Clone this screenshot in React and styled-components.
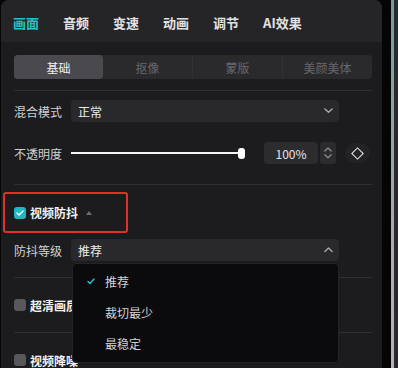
import styled, { createGlobalStyle } from "styled-components";

const GlobalStyle = createGlobalStyle`
  html, body {
    margin: 0;
    padding: 0;
    background: #060607;
  }
  body {
    font-family: "Noto Sans CJK SC", "Noto Sans", sans-serif;
  }
`

const Screen = styled.div`
  display: flex;
  width: 398px;
  height: 368px;
  overflow: hidden;
  padding-left: 1px;
  box-sizing: border-box;
`

const Panel = styled.div`
  width: 381px;
  height: 368px;
  flex-shrink: 0;
  background: #1c1c1e;
  border-radius: 8px 8px 0 0;
  overflow: hidden;
`

const Gap = styled.div`
  width: 9px;
  flex-shrink: 0;
  background: #050506;
`

const Stripe = styled.div`
  width: 3px;
  flex-shrink: 0;
  background: linear-gradient(to bottom, #6c9e9c 0%, #8aa7a6 35%, #b3a9b3 70%, #bbb0ba 100%);
`

const Edge = styled.div`
  flex: 1;
  background: #2a282e;
`

const TabBar = styled.div`
  height: 42px;
  display: flex;
  align-items: center;
  padding: 0 0 0 12px;
  background: #252528;
  gap: 24px;
`

const Tab = styled.div`
  font-size: 13px;
  font-weight: 600;
  color: ${p => (p.active ? "#22c3c9" : "#e2e2e4")};
  padding-top: 2px;
`

const Content = styled.div`
  padding: 13px 10px 0 13px;
`

const Segmented = styled.div`
  display: flex;
  height: 24px;
  background: #2a2a2d;
  border-radius: 4px;
`

const Segment = styled.div`
  flex: 1;
  display: flex;
  align-items: center;
  justify-content: center;
  font-size: 12px;
  color: ${p => (p.active ? "#f0f0f0" : "#68686d")};
  background: ${p => (p.active ? "#4a4a4e" : "transparent")};
  border-left: ${p => (p.divider ? "1px solid #313134" : "none")};
  border-radius: ${p => (p.divider ? "0" : "4px")};
`

const Divider = styled.div`
  height: 1px;
  background: #303033;
  margin-top: ${p => p.mt}px;
`

const Row = styled.div`
  display: flex;
  align-items: center;
  height: 22px;
  margin-top: ${p => p.mt}px;
`

const Label = styled.div`
  width: 57px;
  flex-shrink: 0;
  font-size: 12px;
  color: #d2d2d4;
`

const Select = styled.div`
  position: relative;
  width: 268px;
  height: 22px;
  display: flex;
  align-items: center;
  justify-content: space-between;
  padding: 0 6px 0 7px;
  box-sizing: border-box;
  background: #29292c;
  border-radius: 4px;
  font-size: 12px;
  color: #ececee;
`

const Slider = styled.div`
  width: 174px;
  height: 22px;
  display: flex;
  align-items: center;
`

const Track = styled.div`
  flex: 1;
  height: 2px;
  background: #f4f4f4;
`

const Thumb = styled.div`
  width: 7px;
  height: 11px;
  border-radius: 3px;
  background: #ffffff;
`

const NumberBox = styled.div`
  margin-left: 19px;
  width: 54px;
  height: 22px;
  display: flex;
  align-items: center;
  justify-content: center;
  background: #2c2c2f;
  border-radius: 4px;
  font-size: 12px;
  color: #e4e4e6;
`

const Stepper = styled.div`
  margin-left: 2px;
  width: 16px;
  height: 22px;
  display: flex;
  flex-direction: column;
  align-items: center;
  justify-content: center;
  gap: 2px;
  background: #2c2c2f;
  border-radius: 3px;
`

const KeyButton = styled.div`
  margin-left: 9px;
  width: 25px;
  height: 20px;
  display: flex;
  align-items: center;
  justify-content: center;
  background: #232326;
  border-radius: 10px;
`

const Diamond = styled.div`
  width: 7px;
  height: 7px;
  border: 1.2px solid #f2f2f2;
  transform: rotate(45deg);
`

const SectionHeader = styled.div`
  position: relative;
  height: 41px;
  margin-top: 7px;
  display: flex;
  align-items: center;
  gap: 4px;
`

const Highlight = styled.div`
  position: absolute;
  left: -11px;
  top: 0;
  width: 125px;
  height: 41px;
  box-sizing: border-box;
  border: 2px solid #e0302c;
  border-radius: 3px;
`

const Check = styled.div`
  width: 12px;
  height: 12px;
  border-radius: 3px;
  flex-shrink: 0;
  background: ${p => (p.checked ? "#1fb8c1" : "#58585c")};
  display: flex;
  align-items: center;
  justify-content: center;
`

const SectionTitle = styled.div`
  font-size: 12px;
  font-weight: 700;
  color: #f2f2f2;
`

const Caret = styled.div`
  margin-left: 4px;
  width: 0;
  height: 0;
  border-left: 3.5px solid transparent;
  border-right: 3.5px solid transparent;
  border-bottom: 4px solid #6e6e72;
`

const OptionRow = styled.div`
  height: 54px;
  display: flex;
  align-items: center;
  gap: 4px;
`

const Menu = styled.div`
  position: absolute;
  left: 1px;
  right: 0;
  top: 24px;
  height: 100px;
  box-sizing: border-box;
  padding-top: 2px;
  background: #0b0b0e;
  border: 1px solid #242428;
  border-radius: 4px;
  z-index: 2;
`

const MenuItem = styled.div`
  height: 31px;
  display: flex;
  align-items: center;
  font-size: 12px;
  color: #d4d4d6;
  padding-left: 14px;
`

const MenuCheck = styled.div`
  width: 18px;
  display: flex;
  align-items: center;
`

const Chevron = ({ up, size = 9, color = "#a8a8ac" }) => (
  <svg width={size} height={size * 0.6} viewBox="0 0 10 6">
    <path
      d={up ? "M1 5 L5 1.2 L9 5" : "M1 1 L5 4.8 L9 1"}
      fill="none"
      stroke={color}
      strokeWidth="1.6"
      strokeLinecap="round"
      strokeLinejoin="round"
    />
  </svg>
)

const tabs = ["画面", "音频", "变速", "动画", "调节", "AI效果"]
const segments = ["基础", "抠像", "蒙版", "美颜美体"]
const levels = ["推荐", "裁切最少", "最稳定"]

const App = () => (
  <>
    <GlobalStyle />
    <Screen>
      <Panel>
        <TabBar>
          {tabs.map((t, i) => (
            <Tab key={t} active={i === 0}>{t}</Tab>
          ))}
        </TabBar>
        <Content>
          <Segmented>
            {segments.map((s, i) => (
              <Segment key={s} active={i === 0} divider={i > 1}>{s}</Segment>
            ))}
          </Segmented>
          <Divider mt={11} />

          <Row mt={9}>
            <Label>混合模式</Label>
            <Select>
              正常
              <Chevron />
            </Select>
          </Row>

          <Row mt={20}>
            <Label>不透明度</Label>
            <Slider>
              <Track />
              <Thumb />
            </Slider>
            <NumberBox>100%</NumberBox>
            <Stepper>
              <Chevron up size={8} color="#8a8a8e" />
              <Chevron size={8} color="#8a8a8e" />
            </Stepper>
            <KeyButton>
              <Diamond />
            </KeyButton>
          </Row>
          <Divider mt={20} />

          <SectionHeader>
            <Highlight />
            <Check checked>
              <svg width="8" height="6" viewBox="0 0 8 6">
                <path d="M1 3 L3 5 L7 1" fill="none" stroke="#fff" strokeWidth="1.4" strokeLinecap="round" strokeLinejoin="round" />
              </svg>
            </Check>
            <SectionTitle>视频防抖</SectionTitle>
            <Caret />
          </SectionHeader>

          <Row mt={6}>
            <Label>防抖等级</Label>
            <Select>
              推荐
              <Chevron up />
              <Menu>
                {levels.map((l, i) => (
                  <MenuItem key={l}>
                    <MenuCheck>
                      {i === 0 && (
                        <svg width="8" height="7" viewBox="0 0 8 7">
                          <path d="M1 3.5 L3 5.5 L7 1" fill="none" stroke="#22c3c9" strokeWidth="1.4" strokeLinecap="round" strokeLinejoin="round" />
                        </svg>
                      )}
                    </MenuCheck>
                    {l}
                  </MenuItem>
                ))}
              </Menu>
            </Select>
          </Row>
          <Divider mt={16} />

          <OptionRow>
            <Check />
            <SectionTitle>超清画质</SectionTitle>
          </OptionRow>
          <Divider mt={0} />
          <OptionRow>
            <Check />
            <SectionTitle>视频降噪</SectionTitle>
          </OptionRow>
        </Content>
      </Panel>
      <Gap />
      <Stripe />
      <Edge />
    </Screen>
  </>
)

export default App
